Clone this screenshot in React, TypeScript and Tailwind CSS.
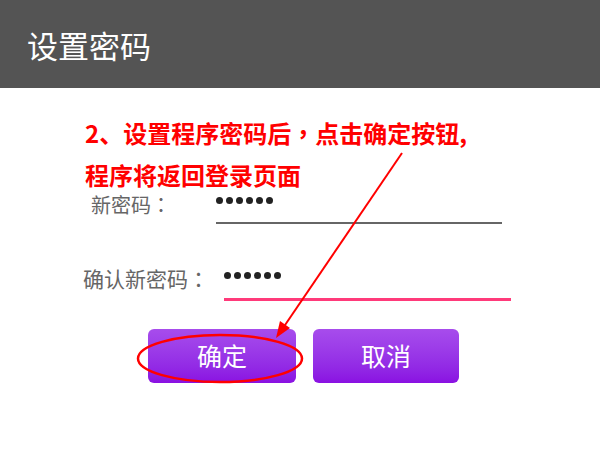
const cjk = { fontFamily: '"Noto Sans CJK SC", "Noto Sans", sans-serif' };
const tc = { fontFamily: '"Noto Sans CJK TC", "Noto Sans", sans-serif' };

const Dots = () => (
  <div className="flex gap-[3px]">
    {[0, 1, 2, 3, 4, 5].map((i) => (
      <span key={i} className="block w-[7px] h-[7px] rounded-full bg-[#222]" />
    ))}
  </div>
);

const App = () => {
  return (
    <div className="relative w-[600px] h-[467px] bg-white overflow-hidden" style={cjk}>
      <div className="h-[88px] bg-[#545454] flex items-center pl-[27px]">
        <h1 className="text-white text-[31px] leading-none">设置密码</h1>
      </div>

      <div className="pt-[102px]">
        <div className="flex pl-[91px]">
          <span className="w-[125px] text-[20px] leading-[30px] text-[#666]">
            新密码<span style={tc}>：</span>
          </span>
          <div className="w-[286px] h-[34px] border-b-2 border-[#666] pt-[7px]">
            <Dots />
          </div>
        </div>

        <div className="flex pl-[83px] mt-[39px]">
          <span className="w-[141px] text-[21px] leading-[30px] text-[#666]">
            确认新密码<span style={tc}>：</span>
          </span>
          <div className="w-[287px] h-[38px] border-b-[3px] border-[#ff3a7a] pt-[9px]">
            <Dots />
          </div>
        </div>

        <div className="flex gap-[17px] pl-[148px] mt-[28px]">
          <button className="w-[148px] h-[54px] rounded-[6px] bg-gradient-to-b from-[#a74cec] to-[#8a10e2] text-white text-[25px]">
            确定
          </button>
          <button className="w-[146px] h-[54px] rounded-[6px] bg-gradient-to-b from-[#a74cec] to-[#8a10e2] text-white text-[25px]">
            取消
          </button>
        </div>
      </div>

      {/* annotation overlay */}
      <div className="absolute left-[85px] top-[112px] text-[#ff0000] text-[24px] leading-[42px] font-bold">
        <p>
          2、设置程序密码后<span style={tc}>，</span>点击确定按钮,
        </p>
        <p>程序将返回登录页面</p>
      </div>
      <svg className="absolute inset-0 pointer-events-none" width="600" height="467">
        <line x1="402" y1="153" x2="283" y2="328" stroke="#ff0000" strokeWidth="2" />
        <polygon points="276,338 290,328 280,321" fill="#ff0000" />
        <ellipse cx="220" cy="358.5" rx="82" ry="23.5" fill="none" stroke="#ff0000" strokeWidth="2.5" />
      </svg>
    </div>
  );
};

export default App;
